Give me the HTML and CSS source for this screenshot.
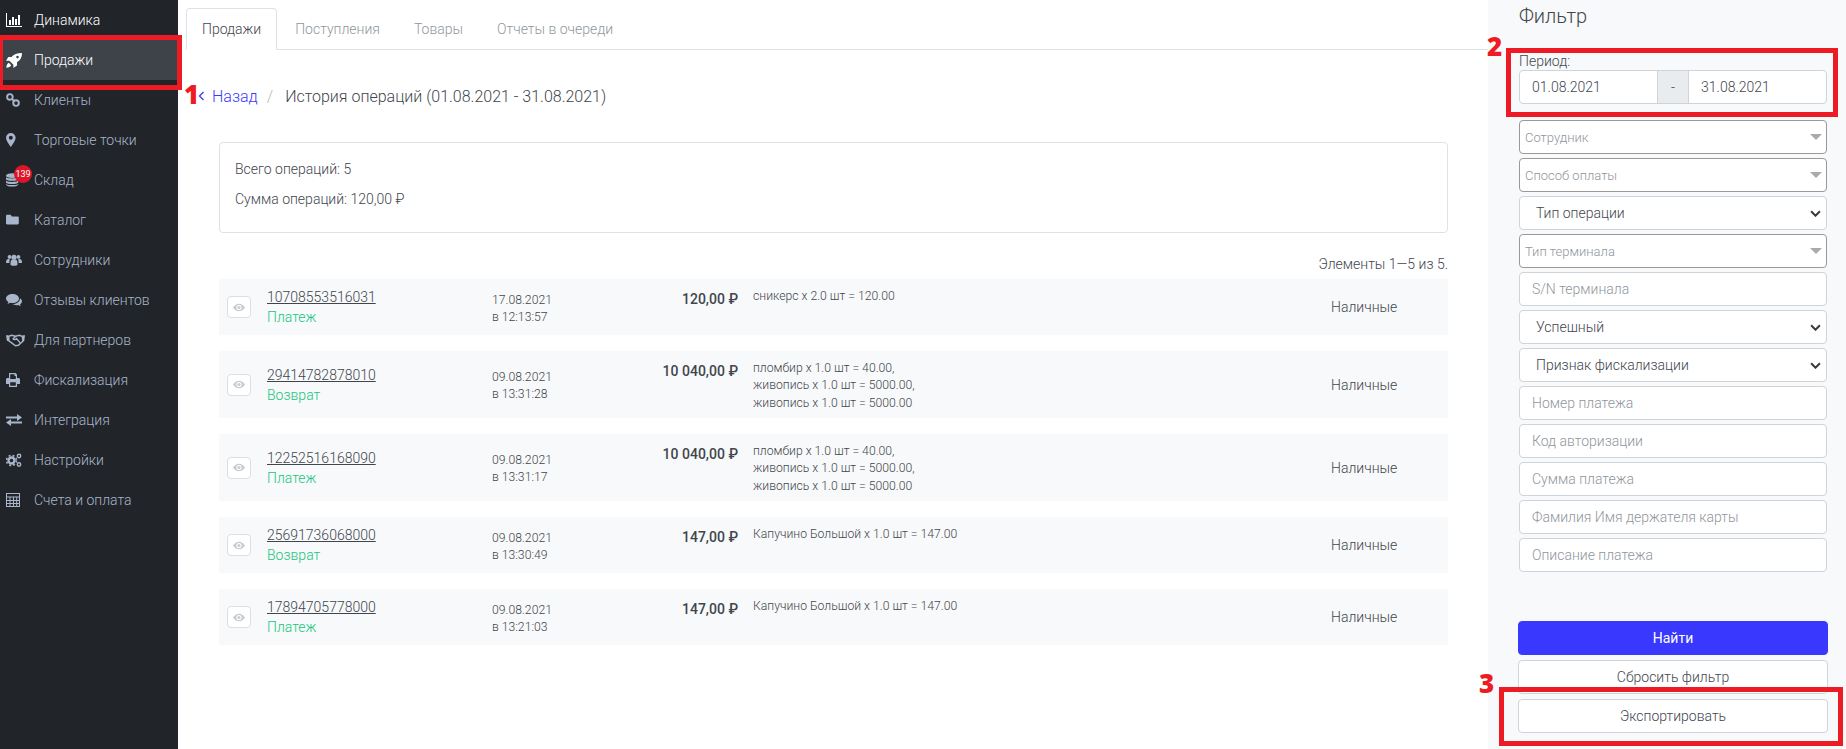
FILE: index.html
```html
<!DOCTYPE html>
<html>
<head>
  <title>Продажи</title>
  <link rel="stylesheet" href="styles.css">
</head>
<body>
  <nav class="sidebar">
    <a class="nav-item nav-item-first">
      <svg class="nav-icon" viewBox="0 0 16 14"><path d="M0 0h1v13h15v1H0z"/><path d="M3 7h2v5H3zM6 4h2v8H6zM9 6h2v6H9zM12 2h2v10h-2z"/></svg>
      <span>Динамика</span>
    </a>
    <a class="nav-item active">
      <svg class="nav-icon nav-icon-rocket" viewBox="0 0 16 15"><path fill-rule="evenodd" d="M16 0c-5 0-8.200 1.300-10.500 4H2.300L0 7.800h3.400l4 4V15L11 12.600V9.200C14.500 7 16 4.300 16 0zm-4.500 2.800a1.300 1.300 0 1 1 0 2.600 1.300 1.300 0 0 1 0-2.600z"/><path d="M2.800 9.800C1.300 10.600.5 12.200.3 14.700c2.500-.2 4.100-1 4.900-2.500z"/></svg>
      <span>Продажи</span>
    </a>
    <a class="nav-item">
      <svg class="nav-icon" viewBox="0 0 16 16" preserveAspectRatio="xMinYMid"><g fill="none" stroke="currentColor" stroke-width="2.200"><circle cx="4.500" cy="4.500" r="3.200"/><circle cx="11.500" cy="11.500" r="3.200"/><path d="M6.500 6.500l3 3"/></g></svg>
      <span>Клиенты</span>
    </a>
    <a class="nav-item">
      <svg class="nav-icon" viewBox="2.500 0 16 16" preserveAspectRatio="xMinYMid"><path fill-rule="evenodd" d="M8 0a5.500 5.500 0 0 0-5.500 5.500C2.500 9 8 16 8 16s5.500-7 5.500-10.500A5.500 5.500 0 0 0 8 0zm0 3.200a2.300 2.300 0 1 1 0 4.600 2.300 2.300 0 0 1 0-4.600z"/></svg>
      <span>Торговые точки</span>
    </a>
    <a class="nav-item">
      <svg class="nav-icon" viewBox="0 0 14 16" preserveAspectRatio="xMinYMid"><ellipse cx="7" cy="3" rx="7" ry="2.800"/><path d="M0 4.800C1.500 6.600 12.500 6.600 14 4.800v2.600c-1.500 2-12.500 2-14 0zM0 8.800c1.500 1.800 12.500 1.800 14 0v2.300c-1.500 2-12.500 2-14 0zM0 12.500c1.500 1.800 12.500 1.800 14 0v.8c-1.500 3-12.500 3-14 0z"/></svg>
      <span>Склад</span>
      <span class="badge">139</span>
    </a>
    <a class="nav-item">
      <svg class="nav-icon" viewBox="0 -1 20 17" preserveAspectRatio="xMinYMid"><path d="M1.500 1h4.300l1.500 2h7.200c.8 0 1.500.7 1.500 1.500v7c0 .8-.7 1.500-1.500 1.500h-13C.7 13 0 12.300 0 11.500v-9C0 1.700.7 1 1.500 1z"/></svg>
      <span>Каталог</span>
    </a>
    <a class="nav-item">
      <svg class="nav-icon" viewBox="0 0 18 14"><circle cx="4" cy="3.500" r="2.200"/><circle cx="14" cy="3.500" r="2.200"/><circle cx="9" cy="4" r="2.900"/><path d="M0 10c0-3 1-4 3-4 .6 0 1 .3 1.500.5C3.800 7.600 3.700 9 3.800 10.500 1.800 10.500 0 10.500 0 10zM18 10c0-3-1-4-3-4-.6 0-1 .3-1.500.5.700 1.100.800 2.500.7 4 2 0 3.800 0 3.800-.5zM5 12c0-4 1-5.500 2.200-5.500.6.400 1.100.6 1.800.6s1.200-.2 1.800-.6C12 6.500 13 8 13 12c0 2-8 2-8 0z"/></svg>
      <span>Сотрудники</span>
    </a>
    <a class="nav-item">
      <svg class="nav-icon" viewBox="0 0 16 14"><path d="M6.500 1C3 1 0 3 0 5.500c0 1.400 1 2.700 2.400 3.500L1.500 11l2.800-1.300c.7.200 1.400.3 2.200.3 3.500 0 6.500-2 6.500-4.500S10 1 6.500 1z"/><path d="M14 5.200c1.300.8 2 1.900 2 3.100 0 1.200-.8 2.300-2 3l.7 1.900-2.500-1.200c-.7.100-1.200.2-1.800.2-1.500 0-2.800-.4-3.800-1.100 3.700 0 7.400-2.300 7.400-5.900z"/></svg>
      <span>Отзывы клиентов</span>
    </a>
    <a class="nav-item">
      <svg class="nav-icon nav-icon-wide" viewBox="0 0 20 14"><g fill="none" stroke="currentColor" stroke-width="1.500"><path d="M3 3l3-1 4 1 4-1 3 1 1 5-5 4.500-3 .5-4-3-3-2z"/><path d="M10 3L7.500 6c1 1 2.500 .8 3.500-.5l4 4.500"/></g><path d="M0 2h2.500l1 6H1zM17.500 2H20l-.8 6h-2.200z"/></svg>
      <span>Для партнеров</span>
    </a>
    <a class="nav-item">
      <svg class="nav-icon" viewBox="0 0 14 14" preserveAspectRatio="xMinYMid"><path fill-rule="evenodd" d="M3 0h6.500L11 1.500V5h1.500c.8 0 1.500.7 1.500 1.500V11h-3v3H3v-3H0V6.500C0 5.700.7 5 1.500 5H3zm1.200 1.200V6h5.600V3H8.500V1.200zm0 8V12.800h5.600V9.200z"/></svg>
      <span>Фискализация</span>
    </a>
    <a class="nav-item">
      <svg class="nav-icon" viewBox="0 0 16 14" preserveAspectRatio="xMinYMid"><path d="M0 4h11V1.500L16 5l-5 3.500V6H0zM16 9H5V6.500L0 10l5 3.500V11h11z" transform="translate(0 -.5)"/></svg>
      <span>Интеграция</span>
    </a>
    <a class="nav-item">
      <svg class="nav-icon" viewBox="0 0 16 14" preserveAspectRatio="xMinYMid"><g fill="none" stroke="currentColor"><circle cx="5.500" cy="7.500" r="3" stroke-width="2.400"/><circle cx="5.500" cy="7.500" r="5" stroke-width="1.600" stroke-dasharray="2 2"/><circle cx="13" cy="3" r="1.700" stroke-width="1.400"/><circle cx="13" cy="11.500" r="1.700" stroke-width="1.400"/></g></svg>
      <span>Настройки</span>
    </a>
    <a class="nav-item">
      <svg class="nav-icon" viewBox="0 0 14 14" preserveAspectRatio="xMinYMid"><path fill-rule="evenodd" d="M0 0h14v14H0zm1 1v2.500h12V1zm0 3.500V7h2.500V4.500zm3.500 0V7H7V4.500zm3.500 0V7h2.200V4.500zm3.200 0V7H13V4.500zM1 8v2h2.500V8zm3.500 0v2H7V8zM8 8v2h2.200V8zm3.200 0v2H13V8zM1 11v2h2.500v-2zm3.500 0v2H7v-2zM8 11v2h2.200v-2zm3.200 0v2H13v-2z"/></svg>
      <span>Счета и оплата</span>
    </a>
  </nav>

  <main class="content">
    <div class="tabs">
      <a class="tab tab-active">Продажи</a>
      <a class="tab">Поступления</a>
      <a class="tab">Товары</a>
      <a class="tab">Отчеты в очереди</a>
    </div>

    <div class="breadcrumb">
      <svg class="back-arrow" viewBox="0 0 7 10"><path d="M5.500 1L1.500 5l4 4" fill="none" stroke="currentColor" stroke-width="1.300"/></svg>
      <a class="back-link">Назад</a>
      <span class="crumb-sep">/</span>
      <span class="crumb-title">История операций (01.08.2021 - 31.08.2021)</span>
    </div>

    <div class="summary">
      <p>Всего операций: 5</p>
      <p>Сумма операций: 120,00 ₽</p>
    </div>

    <div class="pager-info">Элементы 1—5 из 5.</div>

    <div class="operations">
      <div class="operation">
        <button class="eye-btn"><svg viewBox="0 0 14 10"><path fill-rule="evenodd" d="M7 .5C4 .5 1.500 2.500 0 5c1.500 2.500 4 4.500 7 4.500s5.500-2 7-4.500C12.500 2.500 10 .5 7 .5zM7 2a3 3 0 1 1 0 6 3 3 0 0 1 0-6z"/><circle cx="7" cy="5" r="1.800"/></svg></button>
        <div class="op-id"><a>10708553516031</a><span class="op-type">Платеж</span></div>
        <div class="op-date">17.08.2021<br>в 12:13:57</div>
        <div class="op-sum">120,00 ₽</div>
        <div class="op-desc">сникерс x 2.0 шт = 120.00</div>
        <div class="op-method">Наличные</div>
      </div>
      <div class="operation">
        <button class="eye-btn"><svg viewBox="0 0 14 10"><path fill-rule="evenodd" d="M7 .5C4 .5 1.500 2.500 0 5c1.500 2.500 4 4.500 7 4.500s5.500-2 7-4.500C12.500 2.500 10 .5 7 .5zM7 2a3 3 0 1 1 0 6 3 3 0 0 1 0-6z"/><circle cx="7" cy="5" r="1.800"/></svg></button>
        <div class="op-id"><a>29414782878010</a><span class="op-type">Возврат</span></div>
        <div class="op-date">09.08.2021<br>в 13:31:28</div>
        <div class="op-sum">10 040,00 ₽</div>
        <div class="op-desc">пломбир x 1.0 шт = 40.00,<br>живопись x 1.0 шт = 5000.00,<br>живопись x 1.0 шт = 5000.00</div>
        <div class="op-method">Наличные</div>
      </div>
      <div class="operation">
        <button class="eye-btn"><svg viewBox="0 0 14 10"><path fill-rule="evenodd" d="M7 .5C4 .5 1.500 2.500 0 5c1.500 2.500 4 4.500 7 4.500s5.500-2 7-4.500C12.500 2.500 10 .5 7 .5zM7 2a3 3 0 1 1 0 6 3 3 0 0 1 0-6z"/><circle cx="7" cy="5" r="1.800"/></svg></button>
        <div class="op-id"><a>12252516168090</a><span class="op-type">Платеж</span></div>
        <div class="op-date">09.08.2021<br>в 13:31:17</div>
        <div class="op-sum">10 040,00 ₽</div>
        <div class="op-desc">пломбир x 1.0 шт = 40.00,<br>живопись x 1.0 шт = 5000.00,<br>живопись x 1.0 шт = 5000.00</div>
        <div class="op-method">Наличные</div>
      </div>
      <div class="operation">
        <button class="eye-btn"><svg viewBox="0 0 14 10"><path fill-rule="evenodd" d="M7 .5C4 .5 1.500 2.500 0 5c1.500 2.500 4 4.500 7 4.500s5.500-2 7-4.500C12.500 2.500 10 .5 7 .5zM7 2a3 3 0 1 1 0 6 3 3 0 0 1 0-6z"/><circle cx="7" cy="5" r="1.800"/></svg></button>
        <div class="op-id"><a>25691736068000</a><span class="op-type">Возврат</span></div>
        <div class="op-date">09.08.2021<br>в 13:30:49</div>
        <div class="op-sum">147,00 ₽</div>
        <div class="op-desc">Капучино Большой x 1.0 шт = 147.00</div>
        <div class="op-method">Наличные</div>
      </div>
      <div class="operation">
        <button class="eye-btn"><svg viewBox="0 0 14 10"><path fill-rule="evenodd" d="M7 .5C4 .5 1.500 2.500 0 5c1.500 2.500 4 4.500 7 4.500s5.500-2 7-4.500C12.500 2.500 10 .5 7 .5zM7 2a3 3 0 1 1 0 6 3 3 0 0 1 0-6z"/><circle cx="7" cy="5" r="1.800"/></svg></button>
        <div class="op-id"><a>17894705778000</a><span class="op-type">Платеж</span></div>
        <div class="op-date">09.08.2021<br>в 13:21:03</div>
        <div class="op-sum">147,00 ₽</div>
        <div class="op-desc">Капучино Большой x 1.0 шт = 147.00</div>
        <div class="op-method">Наличные</div>
      </div>
    </div>
  </main>

  <aside class="filter">
    <h2 class="filter-title">Фильтр</h2>
    <label class="filter-label">Период:</label>
    <div class="period">
      <div class="period-date">01.08.2021</div>
      <div class="period-sep">-</div>
      <div class="period-date">31.08.2021</div>
    </div>

    <div class="fields">
      <div class="combo">Сотрудник<span class="combo-arrow"></span></div>
      <div class="combo">Способ оплаты<span class="combo-arrow"></span></div>
      <div class="field select">Тип операции<svg class="chevron" viewBox="0 0 10 6"><path d="M1 1l4 4 4-4" fill="none" stroke="currentColor" stroke-width="1.800"/></svg></div>
      <div class="combo">Тип терминала<span class="combo-arrow"></span></div>
      <div class="field">S/N терминала</div>
      <div class="field select">Успешный<svg class="chevron" viewBox="0 0 10 6"><path d="M1 1l4 4 4-4" fill="none" stroke="currentColor" stroke-width="1.800"/></svg></div>
      <div class="field select">Признак фискализации<svg class="chevron" viewBox="0 0 10 6"><path d="M1 1l4 4 4-4" fill="none" stroke="currentColor" stroke-width="1.800"/></svg></div>
      <div class="field">Номер платежа</div>
      <div class="field">Код авторизации</div>
      <div class="field">Сумма платежа</div>
      <div class="field">Фамилия Имя держателя карты</div>
      <div class="field">Описание платежа</div>
    </div>

    <button class="btn btn-primary">Найти</button>
    <button class="btn">Сбросить фильтр</button>
    <button class="btn">Экспортировать</button>
  </aside>

  <!-- red marks drawn over the screenshot -->
  <div class="mark mark-box-1"></div>
  <div class="mark mark-box-2"></div>
  <div class="mark mark-box-3"></div>
  <div class="mark-num mark-num-1">1</div>
  <div class="mark-num mark-num-2">2</div>
  <div class="mark-num mark-num-3">3</div>
</body>
</html>
```

FILE: styles.css
```css
* {
    box-sizing: border-box;
}

body {
    margin: 0;
    height: 749px;
    overflow: hidden;
    display: flex;
    background-color: #fff;
    font-family: 'Roboto', 'Liberation Sans', sans-serif;
    font-size: 14px;
    font-weight: 300;
    color: #3f464d;
}

/* sidebar */
.sidebar {
    width: 178px;
    flex-shrink: 0;
    background-color: #212529;
}

.nav-item {
    position: relative;
    display: flex;
    align-items: center;
    height: 40px;
    padding-left: 6px;
    color: #a9b5cb;
    font-size: 14px;
}

.nav-item.active {
    background-color: #3e434a;
    color: #fff;
}

.nav-item-first {
    color: #fff;
}

.nav-icon {
    width: 16px;
    height: 14px;
    margin-right: 12px;
    fill: currentColor;
    flex-shrink: 0;
}

.nav-icon-rocket {
    height: 15px;
}

.nav-icon-wide {
    width: 19px;
    margin-right: 9px;
}

.badge {
    position: absolute;
    left: 14px;
    top: 5px;
    width: 18px;
    height: 18px;
    border-radius: 50%;
    background-color: #dc1528;
    color: #fff;
    font-size: 9px;
    font-weight: 400;
    line-height: 18px;
    text-align: center;
}

/* main column */
.content {
    width: 1310px;
    flex-shrink: 0;
    padding-top: 8px;
}

.tabs {
    display: flex;
    height: 42px;
    margin-left: 8px;
    border-bottom: 1px solid #dee2e6;
}

.tab {
    height: 42px;
    padding: 0 15px;
    margin-right: 2px;
    border: 1px solid transparent;
    border-radius: 4px 4px 0 0;
    line-height: 40px;
    color: #8f969c;
}

.tab-active {
    border-color: #dee2e6;
    border-bottom-color: #fff;
    background-color: #fff;
    color: #3f464d;
}

.breadcrumb {
    display: flex;
    align-items: center;
    height: 24px;
    margin: 34px 0 0 20px;
    font-size: 16px;
}

.back-arrow {
    width: 7px;
    height: 10px;
    color: #3a3aff;
    margin-right: 7px;
}

.back-link {
    color: #3a3aff;
}

.crumb-sep {
    margin: 0 12px 0 9px;
    color: #b4b8bc;
}

.summary {
    margin: 34px 40px 0 41px;
    height: 91px;
    padding: 16px 15px 0;
    border: 1px solid #dee2e6;
    border-radius: 4px;
}

.summary p {
    margin: 0 0 10px;
    line-height: 20px;
}

.pager-info {
    margin: 21px 40px 5px 0;
    height: 20px;
    line-height: 20px;
    text-align: right;
}

.operations {
    margin: 0 40px 0 41px;
}

.operation {
    display: flex;
    align-items: center;
    min-height: 56px;
    padding: 6.500px 0 6px 8px;
    margin-bottom: 16px;
    background-color: #f8f9fa;
}

.eye-btn {
    display: flex;
    align-items: center;
    justify-content: center;
    width: 24px;
    height: 22px;
    margin-right: 16px;
    padding: 0;
    border: 1px solid #dcdfe3;
    border-radius: 4px;
    background-color: #fff;
}

.eye-btn svg {
    width: 12px;
    height: 9px;
    fill: #c9cdd1;
}

.op-id {
    width: 225px;
    line-height: 20px;
}

.op-id a {
    display: block;
    text-decoration: underline;
}

.op-type {
    display: block;
    color: #16c77c;
}

.op-date {
    width: 84px;
    padding-top: 3px;
    font-size: 12.200px;
    line-height: 17px;
}

.op-sum {
    width: 162px;
    align-self: flex-start;
    padding-top: 3px;
    text-align: right;
    font-weight: 500;
    line-height: 20px;
}

.op-desc {
    width: 593px;
    align-self: flex-start;
    padding: 2px 0 0 15px;
    font-size: 12.200px;
    line-height: 17.500px;
}

/* filter panel */
.filter {
    flex: 1;
    padding: 0 19px 0 31px;
    background-color: #f8f9fa;
    display: flex;
    flex-direction: column;
}

.filter-title {
    margin: 4px 0 0;
    height: 24px;
    font-size: 20px;
    font-weight: 300;
    line-height: 24px;
}

.filter-label {
    margin-top: 26px;
    height: 14px;
    line-height: 14px;
}

.period {
    display: flex;
    height: 34px;
    margin-top: 2px;
    border: 1px solid #ced4da;
    border-radius: 4px;
    background-color: #fff;
}

.period-date {
    flex: 1;
    padding-left: 12px;
    line-height: 32px;
}

.period-sep {
    width: 32px;
    border-left: 1px solid #ced4da;
    border-right: 1px solid #ced4da;
    background-color: #e9ecef;
    line-height: 32px;
    text-align: center;
}

.fields {
    display: flex;
    flex-direction: column;
    gap: 4px;
    margin-top: 16px;
}

.field {
    display: flex;
    align-items: center;
    justify-content: space-between;
    height: 34px;
    padding: 0 5px 0 12px;
    border: 1px solid #ced4da;
    border-radius: 4px;
    background-color: #fff;
    color: #8f969c;
}

.field.select {
    padding-left: 16px;
    color: #3f464d;
}

.chevron {
    width: 11px;
    height: 7px;
    color: #343a40;
}

.combo {
    display: flex;
    align-items: center;
    justify-content: space-between;
    height: 34px;
    padding: 0 4px 0 5px;
    border: 1px solid #999;
    border-radius: 4px;
    background-color: #fff;
    color: #8f969c;
    font-size: 13px;
}

.combo-arrow {
    border-left: 6px solid transparent;
    border-right: 6px solid transparent;
    border-top: 6px solid #aaa;
}

.btn {
    flex-shrink: 0;
    height: 34px;
    margin: 5px -1px 0;
    padding: 0;
    border: 1px solid #ced4da;
    border-radius: 4px;
    background-color: #fff;
    color: #3f464d;
    font-family: inherit;
    font-size: 14px;
    font-weight: 300;
}

.btn-primary {
    margin-top: 49px;
    border-color: #3838ff;
    background-color: #3838ff;
    color: #fff;
    font-weight: 400;
}

/* annotations */
.mark {
    position: absolute;
    border: 5px solid #ed1c24;
}

.mark-box-1 {
    left: -2px;
    top: 35px;
    width: 184px;
    height: 55px;
}

.mark-box-2 {
    left: 1506px;
    top: 48px;
    width: 332px;
    height: 69px;
}

.mark-box-3 {
    left: 1499px;
    top: 687px;
    width: 344px;
    height: 59px;
}

.mark-num {
    position: absolute;
    color: #ed1c24;
    font-family: 'Open Sans', sans-serif;
    font-size: 26px;
    font-weight: 800;
    line-height: 26px;
}

.mark-num-1 {
    left: 184px;
    top: 81px;
}

.mark-num-2 {
    left: 1487px;
    top: 33px;
}

.mark-num-3 {
    left: 1479px;
    top: 670px;
}
```
